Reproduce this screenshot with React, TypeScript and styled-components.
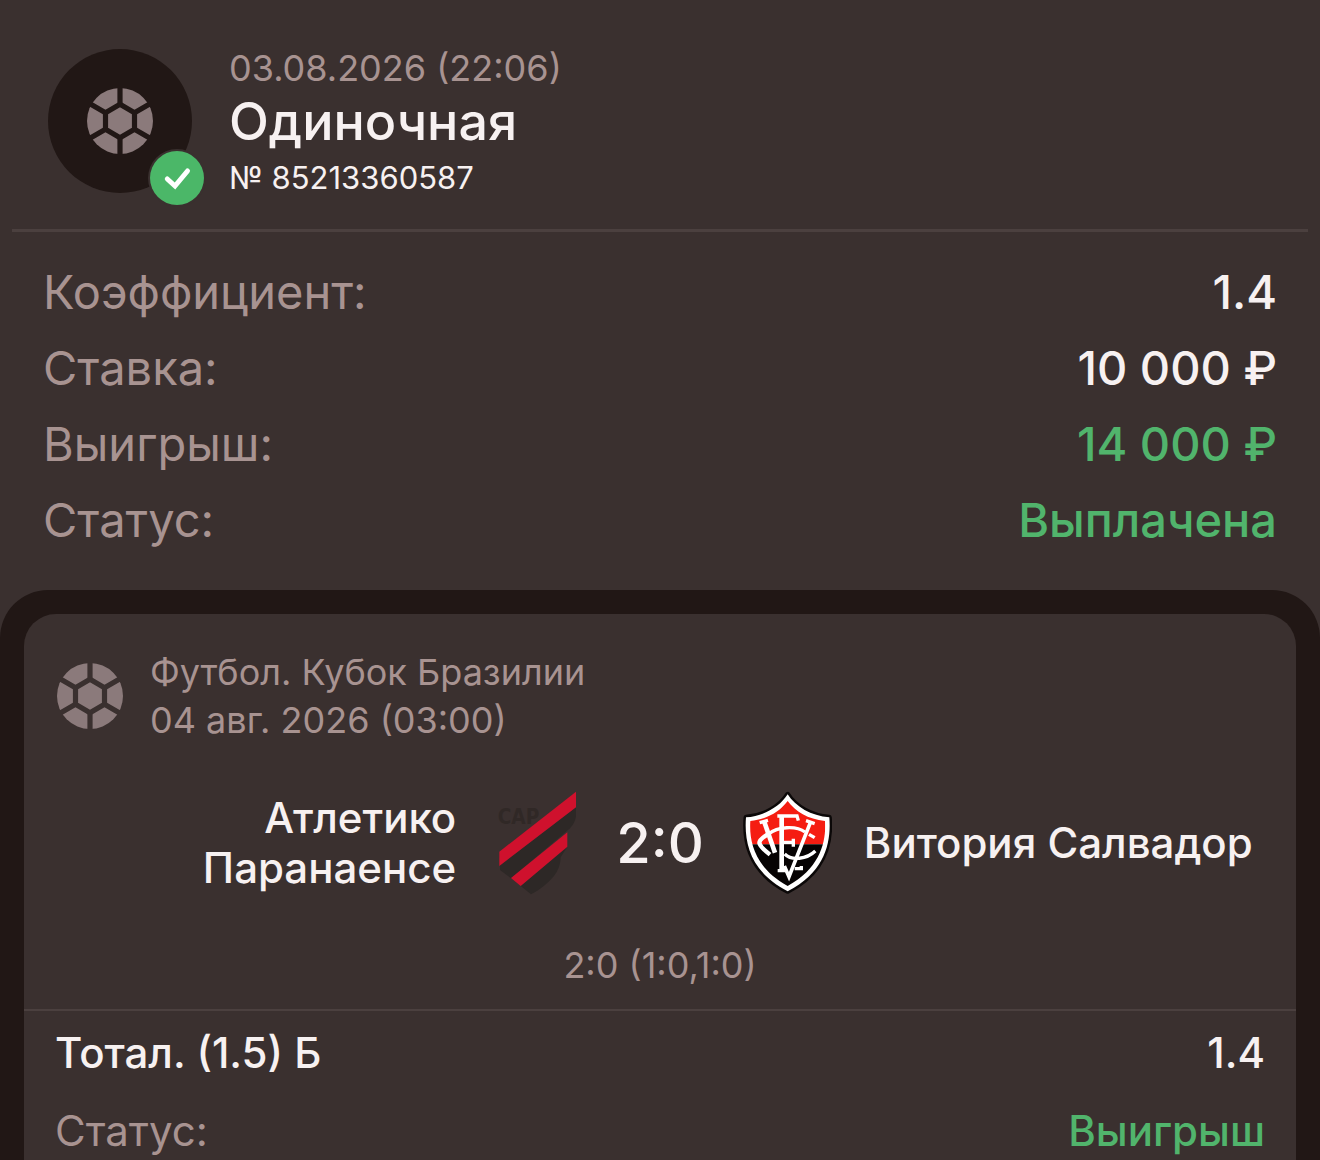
import React, { useId } from "react";
import styled, { createGlobalStyle, ThemeProvider } from "styled-components";

const theme = {
  surface: "#3a302f",
  deep: "#211715",
  text: "#f7f1f1",
  muted: "#a89391",
  icon: "#8b7a7b",
  line: "#4b403f",
  green: "#51b46c",
  badge: "#4bb768",
};

const GlobalStyle = createGlobalStyle`
  *, *::before, *::after { box-sizing: border-box; }
  body {
    margin: 0;
    background: ${theme.surface};
    color: ${theme.text};
    font-family: Inter, "Noto Sans", "Liberation Sans", sans-serif;
  }
  h1, p, dl, dd, dt { margin: 0; font-weight: inherit; }
`;

const Page = styled.main`
  display: flex;
  flex-direction: column;
  min-height: 100vh;
`;

const Header = styled.header`
  display: flex;
  align-items: center;
  gap: 37px;
  margin: 0 12px;
  padding: 38px 36px 25px;
  border-bottom: 3px solid ${(p) => p.theme.line};
`;

const Avatar = styled.div`
  position: relative;
  flex: none;
  display: grid;
  place-items: center;
  width: 144px;
  height: 144px;
  border-radius: 50%;
  background: ${(p) => p.theme.deep};
`;

const WonBadge = styled.span`
  position: absolute;
  right: -12px;
  bottom: -12px;
  display: grid;
  place-items: center;
  width: 54px;
  height: 54px;
  border-radius: 50%;
  background: ${(p) => p.theme.badge};
  box-shadow: 0 0 0 2px ${(p) => p.theme.surface};
`;

const HeaderText = styled.div`
  display: flex;
  flex-direction: column;
  padding-top: 6px;
`;

const Stamp = styled.p`
  font-size: 36px;
  line-height: 48px;
  color: ${(p) => p.theme.muted};
`;

const Title = styled.h1`
  font-size: 52px;
  font-weight: 500;
  line-height: 60px;
`;

const Ticket = styled.p`
  font-size: 31px;
  line-height: 52px;
`;

const Details = styled.dl`
  padding: 22px 43px 32px;
`;

const Row = styled.div<{ $height: number; $size: number }>`
  display: flex;
  align-items: center;
  justify-content: space-between;
  font-size: ${(p) => p.$size}px;
  line-height: ${(p) => p.$height}px;
`;

const Label = styled.dt<{ $strong?: boolean }>`
  color: ${(p) => (p.$strong ? p.theme.text : p.theme.muted)};
  font-weight: ${(p) => (p.$strong ? 500 : 400)};
`;

const Value = styled.dd<{ $won?: boolean }>`
  color: ${(p) => (p.$won ? p.theme.green : p.theme.text)};
  font-weight: 500;
`;

const Tray = styled.section`
  flex: 1;
  display: flex;
  padding: 24px 24px 0;
  border-radius: 48px 48px 0 0;
  background: ${(p) => p.theme.deep};
`;

const EventCard = styled.article`
  flex: 1;
  border-radius: 32px 32px 0 0;
  background: ${(p) => p.theme.surface};
`;

const EventHead = styled.div`
  display: flex;
  align-items: center;
  gap: 26px;
  padding: 34px 32px 0;
`;

const Match = styled.div`
  display: grid;
  grid-template-columns: 1fr auto 1fr;
  align-items: center;
  gap: 32px;
  padding: 47px 32px 0;
`;

const Team = styled.p<{ $home?: boolean }>`
  justify-self: ${(p) => (p.$home ? "end" : "start")};
  max-width: ${(p) => (p.$home ? "280px" : "none")};
  text-align: ${(p) => (p.$home ? "right" : "left")};
  font-size: 42px;
  font-weight: 500;
  line-height: 50px;
`;

const Board = styled.div`
  display: flex;
  align-items: center;
  gap: 32px;
`;

const Score = styled.strong`
  font-size: 56px;
  font-weight: 500;
  line-height: 60px;
`;

const Periods = styled.p`
  padding: 46px 0 20px;
  text-align: center;
  font-size: 36px;
  line-height: 48px;
  color: ${(p) => p.theme.muted};
`;

const Outcome = styled.dl`
  display: flex;
  flex-direction: column;
  gap: 22px;
  padding: 14px 31px 0;
  border-top: 2px solid ${(p) => p.theme.line};
`;

function BallIcon() {
  const id = useId();
  return (
    <svg width="68" height="68" viewBox="-1 -1 68 68" aria-hidden="true">
      <mask id={id}>
        <rect width="66" height="66" fill="#fff" />
        <g fill="none" stroke="#000" strokeWidth="5.2">
          <path d="M33 16.3 47.5 24.65V41.35L33 49.7 18.5 41.35V24.65Z" />
          <path d="M33 16.3V-2M47.5 24.65 66 14M47.5 41.35 66 52M33 49.7V68M18.5 41.35 0 52M18.5 24.65 0 14" />
        </g>
      </mask>
      <circle cx="33" cy="33" r="33" fill={theme.icon} mask={`url(#${id})`} />
    </svg>
  );
}

function CheckIcon() {
  return (
    <svg width="54" height="54" viewBox="0 0 54 54" aria-hidden="true">
      <path d="M17.3 28 25 35 37.5 20" fill="none" stroke="#fff" strokeWidth="5" strokeLinecap="round" />
    </svg>
  );
}

function ParanaenseCrest() {
  return (
    <svg width="96" height="104" viewBox="24 33 288 312" role="img" aria-label="Атлетико Паранаенсе">
      <text x="53" y="132" fontFamily="DejaVu Sans Condensed, DejaVu Sans, sans-serif" fontWeight="700" fontSize="62" fill="#302826">
        CAP
      </text>
      <path d="M288 82 288 108Q286 128 270 145L93 295 60 270V256Z" fill="#2d2826" />
      <path d="M262 200 242 232Q242 262 222 288 194 322 153 343L122 318Z" fill="#2d2826" />
      <path d="M288 35V82L58 258V215Z" fill="#cf112d" />
      <path d="M262 157V200L122 318 93 294Z" fill="#cf112d" />
    </svg>
  );
}

function VitoriaCrest() {
  const id = useId();
  return (
    <svg width="96" height="104" viewBox="-12 9 288 312" role="img" aria-label="Витория Салвадор">
      <path
        d="M143 19C120 56 72 84 18 88 12 162 30 252 143 310 256 252 274 162 268 88 214 84 166 56 143 19Z"
        fill="#fff"
        stroke="#0b0808"
        strokeWidth="15"
        strokeLinejoin="round"
        paintOrder="stroke"
      />
      <clipPath id={id}>
        <path d="M143 39C120 70 82 94 31 99 27 160 44 240 143 294 242 240 259 160 255 99 204 94 166 70 143 39Z" />
      </clipPath>
      <g clipPath={`url(#${id})`}>
        <path d="M0 0H290V169H0Z" fill="#f51d12" />
        <path d="M0 169H290V320H0Z" fill="#060303" />
      </g>
      <g fill="none" stroke="#fff" strokeWidth="10">
        <path d="M112 84H171L175 98" />
        <path d="M125 84V248" strokeWidth="14" />
        <path d="M113 248H137M130 163H160M160 152V176" />
        <path d="M59 104 84 97" />
        <path d="M73 102 105 194" strokeWidth="14" />
        <path d="M133 234 147 266 211 104" strokeWidth="11" />
        <path d="M198 98 224 107M164 242H184V234" />
        <path d="M86 138C112 116 168 112 195 132" />
        <path d="M82 140C48 160 50 168 90 200" strokeWidth="13" />
        <path d="M134 198C155 219 200 214 226 189" />
        <path d="M207 139 224 149" />
      </g>
    </svg>
  );
}

const details = [
  { label: "Коэффициент:", value: "1.4", won: false },
  { label: "Ставка:", value: "10 000 ₽", won: false },
  { label: "Выигрыш:", value: "14 000 ₽", won: true },
  { label: "Статус:", value: "Выплачена", won: true },
];

export default function App() {
  return (
    <ThemeProvider theme={theme}>
      <GlobalStyle />
      <Page>
        <Header>
          <Avatar>
            <BallIcon />
            <WonBadge>
              <CheckIcon />
            </WonBadge>
          </Avatar>
          <HeaderText>
            <Stamp>03.08.2026 (22:06)</Stamp>
            <Title>Одиночная</Title>
            <Ticket>№ 85213360587</Ticket>
          </HeaderText>
        </Header>

        <Details>
          {details.map((d) => (
            <Row key={d.label} $height={76} $size={47}>
              <Label>{d.label}</Label>
              <Value $won={d.won}>{d.value}</Value>
            </Row>
          ))}
        </Details>

        <Tray>
          <EventCard>
            <EventHead>
              <BallIcon />
              <div>
                <Stamp>Футбол. Кубок Бразилии</Stamp>
                <Stamp>04 авг. 2026 (03:00)</Stamp>
              </div>
            </EventHead>
            <Match>
              <Team $home>Атлетико Паранаенсе</Team>
              <Board>
                <ParanaenseCrest />
                <Score>2:0</Score>
                <VitoriaCrest />
              </Board>
              <Team>Витория Салвадор</Team>
            </Match>
            <Periods>2:0 (1:0,1:0)</Periods>
            <Outcome>
              <Row $height={56} $size={42}>
                <Label $strong>Тотал. (1.5) Б</Label>
                <Value>1.4</Value>
              </Row>
              <Row $height={56} $size={42}>
                <Label>Статус:</Label>
                <Value $won>Выигрыш</Value>
              </Row>
            </Outcome>
          </EventCard>
        </Tray>
      </Page>
    </ThemeProvider>
  );
}
